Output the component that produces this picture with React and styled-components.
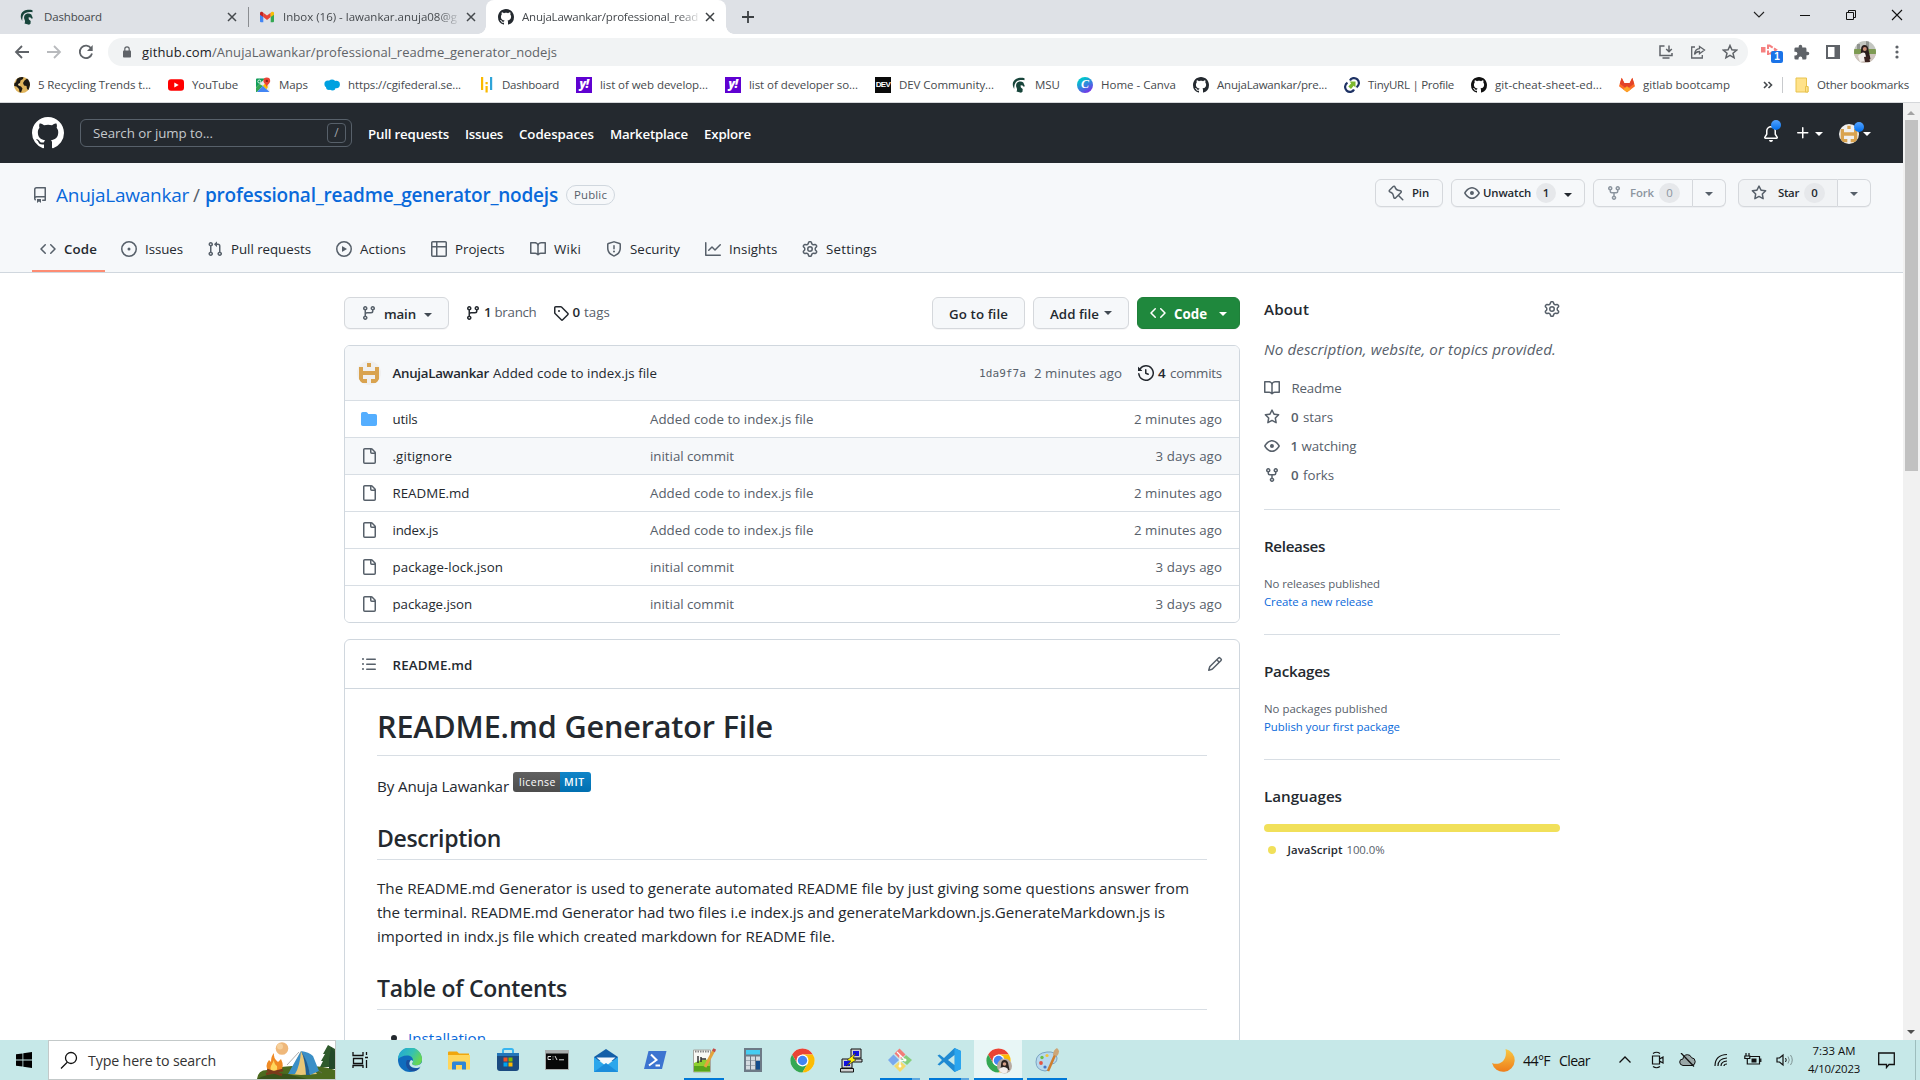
import React, { useLayoutEffect, useRef, useState } from "react";
import styled, { createGlobalStyle, css } from "styled-components";

const Global = createGlobalStyle`
  * { box-sizing: border-box; }
  html, body { margin: 0; padding: 0; overflow: hidden; background: #fff; }
  body { font-family: "Open Sans", "Noto Sans", sans-serif; color: #24292f; }
  svg { display: block; flex: none; }
`;

/* ---------- text ---------- */

const TextBox = styled.span`
  display: inline-block;
  flex: none;
  white-space: pre;
  font-family: ${(p) => (p.$mono ? '"DejaVu Sans Mono", "Liberation Mono", monospace' : '"Open Sans", "Noto Sans", sans-serif')};
  font-size: ${(p) => p.$size || 13.3}px;
  line-height: ${(p) => p.$lh || 20}px;
  font-weight: ${(p) => p.$weight || 400};
  font-style: ${(p) => (p.$italic ? "italic" : "normal")};
  color: ${(p) => p.$color || "#24292f"};
  margin-left: ${(p) => p.$ml || 0}px;
  padding-top: ${(p) => p.$pt || 0}px;
  padding-bottom: ${(p) => p.$pb || 0}px;
`;

// Tracks its letters so that the label takes exactly `w` pixels.
function Text({ w, children, ...rest }) {
  const ref = useRef(null);
  const [spacing, setSpacing] = useState(0);
  useLayoutEffect(() => {
    const natural = ref.current.getBoundingClientRect().width;
    setSpacing((w - natural) / String(children).length);
  }, []);
  return (
    <TextBox ref={ref} style={{ letterSpacing: spacing + "px" }} {...rest}>
      {children}
    </TextBox>
  );
}

/* ---------- octicons ---------- */

const paths = {
  repo: "M2 2.5A2.5 2.5 0 0 1 4.5 0h8.75a.75.75 0 0 1 .75.75v12.5a.75.75 0 0 1-.75.75h-2.5a.75.75 0 0 1 0-1.5h1.75v-2h-8a1 1 0 0 0-.714 1.7.75.75 0 1 1-1.072 1.05A2.495 2.495 0 0 1 2 11.5Zm10.5-1h-8a1 1 0 0 0-1 1v6.708A2.486 2.486 0 0 1 4.5 9h8ZM5 12.25a.25.25 0 0 1 .25-.25h3.5a.25.25 0 0 1 .25.25v3.25a.25.25 0 0 1-.4.2l-1.45-1.087a.249.249 0 0 0-.3 0L5.4 15.7a.25.25 0 0 1-.4-.2Z",
  code: "m11.28 3.22 4.25 4.25a.75.75 0 0 1 0 1.06l-4.25 4.25a.749.749 0 0 1-1.275-.326.749.749 0 0 1 .215-.734L13.94 8l-3.72-3.72a.749.749 0 0 1 .326-1.275.749.749 0 0 1 .734.215Zm-6.56 0a.751.751 0 0 1 1.042.018.751.751 0 0 1 .018 1.042L2.06 8l3.72 3.72a.749.749 0 0 1-.326 1.275.749.749 0 0 1-.734-.215L.47 8.53a.75.75 0 0 1 0-1.06Z",
  issue: "M8 9.5a1.5 1.5 0 1 0 0-3 1.5 1.5 0 0 0 0 3ZM8 0a8 8 0 1 1 0 16A8 8 0 0 1 8 0ZM1.5 8a6.5 6.5 0 1 0 13 0 6.5 6.5 0 0 0-13 0Z",
  pull: "M1.5 3.25a2.25 2.25 0 1 1 3 2.122v5.256a2.251 2.251 0 1 1-1.5 0V5.372A2.25 2.25 0 0 1 1.5 3.25Zm5.677-.177L9.573.677A.25.25 0 0 1 10 .854V2.5h1A2.5 2.5 0 0 1 13.5 5v5.628a2.251 2.251 0 1 1-1.5 0V5a1 1 0 0 0-1-1h-1v1.646a.25.25 0 0 1-.427.177L7.177 3.427a.25.25 0 0 1 0-.354ZM3.75 2.5a.75.75 0 1 0 0 1.5.75.75 0 0 0 0-1.5Zm0 9.5a.75.75 0 1 0 0 1.5.75.75 0 0 0 0-1.5Zm8.25.75a.75.75 0 1 0 1.5 0 .75.75 0 0 0-1.5 0Z",
  play: "M8 0a8 8 0 1 1 0 16A8 8 0 0 1 8 0ZM1.5 8a6.5 6.5 0 1 0 13 0 6.5 6.5 0 0 0-13 0Zm4.879-2.773 4.264 2.559a.25.25 0 0 1 0 .428l-4.264 2.559A.25.25 0 0 1 6 10.559V5.442a.25.25 0 0 1 .379-.215Z",
  table: "M0 1.75C0 .784.784 0 1.75 0h12.5C15.216 0 16 .784 16 1.75v12.5A1.75 1.75 0 0 1 14.25 16H1.75A1.75 1.75 0 0 1 0 14.25ZM6.5 6.5v8h7.75a.25.25 0 0 0 .25-.25V6.5Zm8-1.5V1.75a.25.25 0 0 0-.25-.25H6.5V5Zm-13 1.5v7.75c0 .138.112.25.25.25H5v-8ZM5 5V1.5H1.75a.25.25 0 0 0-.25.25V5Z",
  book: "M0 1.75A.75.75 0 0 1 .75 1h4.253c1.227 0 2.317.59 3 1.501A3.743 3.743 0 0 1 11.006 1h4.245a.75.75 0 0 1 .75.75v10.5a.75.75 0 0 1-.75.75h-4.507a2.25 2.25 0 0 0-1.591.659l-.622.621a.75.75 0 0 1-1.06 0l-.622-.621A2.25 2.25 0 0 0 5.258 13H.75a.75.75 0 0 1-.75-.75Zm7.251 10.324.004-5.073-.002-2.253A2.25 2.25 0 0 0 5.003 2.5H1.5v9h3.757a3.75 3.75 0 0 1 1.994.574ZM8.755 4.75l-.004 7.322a3.752 3.752 0 0 1 1.992-.572H14.5v-9h-3.495a2.25 2.25 0 0 0-2.25 2.25Z",
  shield: "M7.467.133a1.748 1.748 0 0 1 1.066 0l5.25 1.68A1.75 1.75 0 0 1 15 3.48V7c0 1.566-.32 3.182-1.303 4.682-.983 1.498-2.585 2.813-5.032 3.855a1.697 1.697 0 0 1-1.33 0c-2.447-1.042-4.049-2.357-5.032-3.855C1.32 10.182 1 8.566 1 7V3.48a1.75 1.75 0 0 1 1.217-1.667Zm.61 1.429a.25.25 0 0 0-.153 0l-5.25 1.68a.25.25 0 0 0-.174.238V7c0 1.358.275 2.666 1.057 3.86.784 1.194 2.121 2.34 4.366 3.297a.196.196 0 0 0 .154 0c2.245-.956 3.582-2.104 4.366-3.298C13.225 9.666 13.5 8.36 13.5 7V3.48a.251.251 0 0 0-.174-.237l-5.25-1.68ZM8.75 4.75v3a.75.75 0 0 1-1.5 0v-3a.75.75 0 0 1 1.5 0ZM9 10.5a1 1 0 1 1-2 0 1 1 0 0 1 2 0Z",
  graph: "M1.5 1.75V13.5h13.75a.75.75 0 0 1 0 1.5H.75a.75.75 0 0 1-.75-.75V1.75a.75.75 0 0 1 1.5 0Zm14.28 2.53-5.25 5.25a.75.75 0 0 1-1.06 0L7 7.06 4.28 9.78a.751.751 0 0 1-1.042-.018.751.751 0 0 1-.018-1.042l3.25-3.25a.75.75 0 0 1 1.06 0L10 7.94l4.72-4.72a.751.751 0 0 1 1.042.018.751.751 0 0 1 .018 1.042Z",
  gear: "M8 0a8.2 8.2 0 0 1 .701.031C9.444.095 9.99.645 10.16 1.29l.288 1.107c.018.066.079.158.212.224.231.114.454.243.668.386.123.082.233.09.299.071l1.103-.303c.644-.176 1.392.021 1.82.63.27.385.506.792.704 1.218.315.675.111 1.422-.364 1.891l-.814.806c-.049.048-.098.147-.088.294.016.257.016.515 0 .772-.01.147.038.246.088.294l.814.806c.475.469.679 1.216.364 1.891a7.977 7.977 0 0 1-.704 1.217c-.428.61-1.176.807-1.82.63l-1.102-.302c-.067-.019-.177-.011-.3.071a5.909 5.909 0 0 1-.668.386c-.133.066-.194.158-.211.224l-.29 1.106c-.168.646-.715 1.196-1.458 1.26a8.006 8.006 0 0 1-1.402 0c-.743-.064-1.289-.614-1.458-1.26l-.289-1.106c-.018-.066-.079-.158-.212-.224a5.738 5.738 0 0 1-.668-.386c-.123-.082-.233-.09-.299-.071l-1.103.303c-.644.176-1.392-.021-1.82-.63a8.12 8.12 0 0 1-.704-1.218c-.315-.675-.111-1.422.363-1.891l.815-.806c.05-.048.098-.147.088-.294a6.214 6.214 0 0 1 0-.772c.01-.147-.038-.246-.088-.294l-.815-.806C.635 6.045.431 5.298.746 4.623a7.92 7.92 0 0 1 .704-1.217c.428-.61 1.176-.807 1.82-.63l1.102.302c.067.019.177.011.3-.071.214-.143.437-.272.668-.386.133-.066.194-.158.211-.224l.29-1.106C6.009.645 6.556.095 7.299.03 7.53.01 7.764 0 8 0Zm-.571 1.525c-.036.003-.108.036-.137.146l-.289 1.105c-.147.561-.549.967-.998 1.189-.173.086-.34.183-.5.29-.417.278-.97.423-1.529.27l-1.103-.303c-.109-.03-.175.016-.195.045-.22.312-.412.644-.573.99-.014.031-.021.11.059.19l.815.806c.411.406.562.957.53 1.456a4.709 4.709 0 0 0 0 .582c.032.499-.119 1.05-.53 1.456l-.815.806c-.081.08-.073.159-.059.19.162.346.353.677.573.989.02.03.085.076.195.046l1.102-.303c.56-.153 1.113-.008 1.53.27.161.107.328.204.501.29.447.222.85.629.997 1.189l.289 1.105c.029.109.101.143.137.146a6.6 6.6 0 0 0 1.142 0c.036-.003.108-.036.137-.146l.289-1.105c.147-.561.549-.967.998-1.189.173-.086.34-.183.5-.29.417-.278.97-.423 1.529-.27l1.103.303c.109.029.175-.016.195-.045.22-.313.411-.644.573-.99.014-.031.021-.11-.059-.19l-.815-.806c-.411-.406-.562-.957-.53-1.456a4.709 4.709 0 0 0 0-.582c-.032-.499.119-1.05.53-1.456l.815-.806c.081-.08.073-.159.059-.19a6.464 6.464 0 0 0-.573-.989c-.02-.03-.085-.076-.195-.046l-1.102.303c-.56.153-1.113.008-1.53-.27a4.44 4.44 0 0 0-.501-.29c-.447-.222-.85-.629-.997-1.189l-.289-1.105c-.029-.11-.101-.143-.137-.146a6.6 6.6 0 0 0-1.142 0ZM11 8a3 3 0 1 1-6 0 3 3 0 0 1 6 0ZM9.5 8a1.5 1.5 0 1 0-3.001.001A1.5 1.5 0 0 0 9.5 8Z",
  eye: "M8 2c1.981 0 3.671.992 4.933 2.078 1.27 1.091 2.187 2.345 2.637 3.023a1.62 1.62 0 0 1 0 1.798c-.45.678-1.367 1.932-2.637 3.023C11.67 13.008 9.981 14 8 14c-1.981 0-3.671-.992-4.933-2.078C1.797 10.83.88 9.576.43 8.898a1.62 1.62 0 0 1 0-1.798c.45-.677 1.367-1.931 2.637-3.022C4.33 2.992 6.019 2 8 2ZM1.679 7.932a.12.12 0 0 0 0 .136c.411.622 1.241 1.75 2.366 2.717C5.176 11.758 6.527 12.5 8 12.5c1.473 0 2.825-.742 3.955-1.715 1.124-.967 1.954-2.096 2.366-2.717a.12.12 0 0 0 0-.136c-.412-.621-1.242-1.75-2.366-2.717C10.824 4.242 9.473 3.5 8 3.5c-1.473 0-2.825.742-3.955 1.715-1.124.967-1.954 2.096-2.366 2.717ZM8 10a2 2 0 1 1-.001-3.999A2 2 0 0 1 8 10Z",
  fork: "M5 5.372v.878c0 .414.336.75.75.75h4.5a.75.75 0 0 0 .75-.75v-.878a2.25 2.25 0 1 1 1.5 0v.878a2.25 2.25 0 0 1-2.25 2.25h-1.5v2.128a2.251 2.251 0 1 1-1.5 0V8.5h-1.5A2.25 2.25 0 0 1 3.5 6.25v-.878a2.25 2.25 0 1 1 1.5 0ZM5 3.25a.75.75 0 1 0-1.5 0 .75.75 0 0 0 1.5 0Zm6.75.75a.75.75 0 1 0 0-1.5.75.75 0 0 0 0 1.5Zm-3 8.75a.75.75 0 1 0-1.5 0 .75.75 0 0 0 1.5 0Z",
  star: "M8 .25a.75.75 0 0 1 .673.418l1.882 3.815 4.21.612a.75.75 0 0 1 .416 1.279l-3.046 2.97.719 4.192a.751.751 0 0 1-1.088.791L8 12.347l-3.766 1.98a.75.75 0 0 1-1.088-.79l.72-4.194L.818 6.374a.75.75 0 0 1 .416-1.28l4.21-.611L7.327.668A.75.75 0 0 1 8 .25Zm0 2.445L6.615 5.5a.75.75 0 0 1-.564.41l-3.097.45 2.24 2.184a.75.75 0 0 1 .216.664l-.528 3.084 2.769-1.456a.75.75 0 0 1 .698 0l2.77 1.456-.53-3.084a.75.75 0 0 1 .216-.664l2.24-2.183-3.096-.45a.75.75 0 0 1-.564-.41L8 2.694Z",
  branch: "M9.5 3.25a2.25 2.25 0 1 1 3 2.122V6A2.5 2.5 0 0 1 10 8.5H6a1 1 0 0 0-1 1v1.128a2.251 2.251 0 1 1-1.5 0V5.372a2.25 2.25 0 1 1 1.5 0v1.836A2.493 2.493 0 0 1 6 7h4a1 1 0 0 0 1-1v-.628A2.25 2.25 0 0 1 9.5 3.25Zm-6 0a.75.75 0 1 0 1.5 0 .75.75 0 0 0-1.5 0Zm8.25-.75a.75.75 0 1 0 0 1.5.75.75 0 0 0 0-1.5ZM4.25 12a.75.75 0 1 0 0 1.5.75.75 0 0 0 0-1.5Z",
  tag: "M1 7.775V2.75C1 1.784 1.784 1 2.75 1h5.025c.464 0 .91.184 1.238.513l6.25 6.25a1.75 1.75 0 0 1 0 2.474l-5.026 5.026a1.75 1.75 0 0 1-2.474 0l-6.25-6.25A1.752 1.752 0 0 1 1 7.775Zm1.5 0c0 .066.026.13.073.177l6.25 6.25a.25.25 0 0 0 .354 0l5.025-5.025a.25.25 0 0 0 0-.354l-6.25-6.25a.25.25 0 0 0-.177-.073H2.75a.25.25 0 0 0-.25.25ZM6 5a1 1 0 1 1 0 2 1 1 0 0 1 0-2Z",
  history: "m.427 1.927 1.215 1.215a8.002 8.002 0 1 1-1.6 5.685.75.75 0 1 1 1.493-.154 6.5 6.5 0 1 0 1.18-4.458l1.358 1.358A.25.25 0 0 1 3.896 6H.25A.25.25 0 0 1 0 5.75V2.104a.25.25 0 0 1 .427-.177ZM7.75 4a.75.75 0 0 1 .75.75v2.992l2.028.812a.75.75 0 0 1-.557 1.392l-2.5-1A.751.751 0 0 1 7 8.25v-3.5A.75.75 0 0 1 7.75 4Z",
  file: "M2 1.75C2 .784 2.784 0 3.75 0h6.586c.464 0 .909.184 1.237.513l2.914 2.914c.329.328.513.773.513 1.237v9.586A1.75 1.75 0 0 1 13.25 16h-9.5A1.75 1.75 0 0 1 2 14.25Zm1.75-.25a.25.25 0 0 0-.25.25v12.5c0 .138.112.25.25.25h9.5a.25.25 0 0 0 .25-.25V6h-2.75A1.75 1.75 0 0 1 9 4.25V1.5Zm6.75.062V4.25c0 .138.112.25.25.25h2.688l-.011-.013-2.914-2.914-.013-.011Z",
  folder: "M1.75 1A1.75 1.75 0 0 0 0 2.75v10.5C0 14.216.784 15 1.75 15h12.5A1.75 1.75 0 0 0 16 13.25v-8.5A1.75 1.75 0 0 0 14.25 3H7.5a.25.25 0 0 1-.2-.1l-.9-1.2C6.07 1.26 5.55 1 5 1H1.75Z",
  list: "M5.75 2.5h8.5a.75.75 0 0 1 0 1.5h-8.5a.75.75 0 0 1 0-1.5Zm0 5h8.5a.75.75 0 0 1 0 1.5h-8.5a.75.75 0 0 1 0-1.5Zm0 5h8.5a.75.75 0 0 1 0 1.5h-8.5a.75.75 0 0 1 0-1.5ZM2 14a1 1 0 1 1 0-2 1 1 0 0 1 0 2Zm1-6a1 1 0 1 1-2 0 1 1 0 0 1 2 0ZM2 4a1 1 0 1 1 0-2 1 1 0 0 1 0 2Z",
  pencil: "M11.013 1.427a1.75 1.75 0 0 1 2.474 0l1.086 1.086a1.75 1.75 0 0 1 0 2.474l-8.61 8.61c-.21.21-.47.364-.756.445l-3.251.93a.75.75 0 0 1-.927-.928l.929-3.25c.081-.286.235-.547.445-.758l8.61-8.61Zm.176 4.823L9.75 4.81l-6.286 6.287a.253.253 0 0 0-.064.108l-.558 1.953 1.953-.558a.253.253 0 0 0 .108-.064Zm1.238-3.763a.25.25 0 0 0-.354 0L10.811 3.75l1.439 1.44 1.263-1.263a.25.25 0 0 0 0-.354Z",
  bell: "M8 16a2 2 0 0 0 1.985-1.75c.017-.137-.097-.25-.235-.25h-3.5c-.138 0-.252.113-.235.25A2 2 0 0 0 8 16ZM3 5a5 5 0 0 1 10 0v2.947c0 .05.015.098.042.139l1.703 2.555A1.519 1.519 0 0 1 13.482 13H2.518a1.516 1.516 0 0 1-1.263-2.36l1.703-2.554A.255.255 0 0 0 3 7.947Zm5-3.5A3.5 3.5 0 0 0 4.5 5v2.947c0 .346-.102.683-.294.97l-1.703 2.556a.017.017 0 0 0-.003.01l.001.006c0 .002.002.004.004.006l.006.004.007.001h10.964l.007-.001.006-.004.004-.006.001-.007a.017.017 0 0 0-.003-.01l-1.703-2.554a1.745 1.745 0 0 1-.294-.97V5A3.5 3.5 0 0 0 8 1.5Z",
  plus: "M7.75 2a.75.75 0 0 1 .75.75V7h4.25a.75.75 0 0 1 0 1.5H8.5v4.25a.75.75 0 0 1-1.5 0V8.5H2.75a.75.75 0 0 1 0-1.5H7V2.75A.75.75 0 0 1 7.75 2Z",
  pin: "m11.294.984 3.722 3.722a1.75 1.75 0 0 1-.504 2.826l-1.327.613a3.089 3.089 0 0 0-1.707 2.084l-.584 2.454c-.317 1.332-1.972 1.8-2.94.832L5.75 11.311 1.78 15.28a.749.749 0 1 1-1.06-1.06l3.969-3.97-2.204-2.204c-.968-.968-.5-2.623.832-2.94l2.454-.584a3.08 3.08 0 0 0 2.084-1.707l.613-1.327a1.75 1.75 0 0 1 2.826-.504ZM6.283 9.723l2.732 2.731a.25.25 0 0 0 .42-.119l.584-2.454a4.586 4.586 0 0 1 2.537-3.098l1.328-.613a.25.25 0 0 0 .072-.404l-3.722-3.722a.25.25 0 0 0-.404.072l-.613 1.328a4.584 4.584 0 0 1-3.098 2.537l-2.454.584a.25.25 0 0 0-.119.42l2.731 2.732Z",
  github: "M8 0c4.42 0 8 3.58 8 8a8.013 8.013 0 0 1-5.45 7.59c-.4.08-.55-.17-.55-.38 0-.27.01-1.13.01-2.2 0-.75-.25-1.23-.54-1.48 1.78-.2 3.65-.88 3.65-3.95 0-.88-.31-1.59-.82-2.15.08-.2.36-1.02-.08-2.12 0 0-.67-.22-2.2.82-.64-.18-1.32-.27-2-.27-.68 0-1.36.09-2 .27-1.53-1.03-2.2-.82-2.2-.82-.44 1.1-.16 1.92-.08 2.12-.51.56-.82 1.28-.82 2.15 0 3.06 1.86 3.75 3.64 3.95-.23.2-.44.55-.51 1.07-.46.21-1.61.55-2.33-.66-.15-.24-.6-.83-1.23-.82-.67.01-.27.38.01.53.34.19.73.9.82 1.13.16.45.68 1.31 2.69.94 0 .67.01 1.3.01 1.49 0 .21-.15.45-.55.38A7.995 7.995 0 0 1 0 8c0-4.42 3.58-8 8-8Z",
};

const Svg = styled.svg`
  margin-left: ${(p) => p.$ml || 0}px;
  fill: ${(p) => p.$color || "#57606a"};
  transform: ${(p) => (p.$flip ? "scaleX(-1)" : "none")};
`;

const Oct = ({ name, size = 16, color, ml, flip }) => (
  <Svg width={size} height={size} viewBox="0 0 16 16" $color={color} $ml={ml} $flip={flip}>
    <path d={paths[name]} />
  </Svg>
);

const Caret = styled.i`
  flex: none;
  width: 0;
  height: 0;
  border: 4px solid transparent;
  border-bottom: 0;
  border-top-color: ${(p) => p.$color || "#24292f"};
  margin-left: ${(p) => p.$ml || 0}px;
  margin-top: ${(p) => p.$mt || 0}px;
`;

const PlainSvg = styled.svg`
  margin-left: ${(p) => p.$ml || 0}px;
`;
const Line = ({ d, w = 16, h = 16, vb, color = "#5f6368", sw = 1.5, ml, fill = "none" }) => (
  <PlainSvg width={w} height={h} viewBox={vb || `0 0 ${w} ${h}`} $ml={ml}>
    <path d={d} stroke={color} strokeWidth={sw} fill={fill} />
  </PlainSvg>
);

/* ---------- site icons ---------- */

const Spartan = ({ ml }) => (
  <PlainSvg width="16" height="16" viewBox="0 0 16 16" $ml={ml}>
    <path fill="#18453b" d="M13.5 1.2C9 .2 3.500 1 2 5.600 1.400 7.800 2 10 3.200 12c.2-2.500 0-4.500 1.300-6.300C6 3.400 9.500 2.700 13.500 3.300z" />
    <path fill="#18453b" d="M5.500 6.500C7 4.300 10.300 4 12.300 5.500l1.400 3.200-.6 1.200-2-1.700-1.600.2.400 2.200 1.800 1.500-.2 2.700-1.500.9-4.500-1.200c.9-1.500.6-2.800-.1-4.200-.5-1.200-.4-2.700.1-3.800z" />
  </PlainSvg>
);
const Gmail = () => (
  <svg width="16" height="16" viewBox="0 0 16 16">
    <path fill="#4285f4" d="M1 3.500 4.300 6v7.200H2A1 1 0 0 1 1 12.200z" />
    <path fill="#34a853" d="M15 3.500 11.700 6v7.200H14a1 1 0 0 0 1-1z" />
    <path fill="#ea4335" d="M4.300 3.800 8 6.600l3.700-2.800v4.300L8 10.900 4.300 8.100z" />
    <path fill="#c5221f" d="M1 4.200c0-1.500 1.600-1.900 2.500-1.200l.8.700v4.400L1 5.700z" />
    <path fill="#fbbc04" d="M15 4.200c0-1.500-1.600-1.900-2.500-1.200l-.8.700v4.400L15 5.700z" />
  </svg>
);
const Globe = () => (
  <svg width="16" height="16" viewBox="0 0 16 16">
    <circle cx="8" cy="8" r="8" fill="#e0b45c" />
    <path fill="#f3dfae" d="M1 6q2-3 4-3l1 4-2 5z" />
    <path fill="#1d1a14" d="M3 1.800Q6-.5 9.500.2L9 2 6.500 3.500 6 6l-2 1 .5 1.500L7 9.500l1.500 2L7 15.500 5.500 15 5 12 2.500 9.500.2 9 .3 6.500 2 5zM10.500 3.500l2.500-2q3 2.500 3 6.500l-1.500 5-1.500-1-.5-3-2.500-.5-1-2.500z" />
  </svg>
);
const YouTube = () => (
  <svg width="16" height="16" viewBox="0 0 16 16">
    <rect x="0" y="2.300" width="16" height="11.400" rx="3" fill="#f00" />
    <path d="M6.300 5.500v5L10.700 8z" fill="#fff" />
  </svg>
);
const Maps = () => (
  <svg width="16" height="16" viewBox="0 0 16 16">
    <rect x="1" y="1.500" width="13.500" height="13.500" rx="1" fill="#e8eaed" />
    <path d="M1 2.500a1 1 0 0 1 1-1h8L1 10.500z" fill="#0f9d58" />
    <path d="M1 10.500 4.500 7 8 9l-6 6H1z" fill="#34a853" />
    <path d="M2 15 8 8.800 14.500 15z" fill="#4285f4" />
    <path d="M8 8.800 10.500 6l2.500 4-1.500 2.200z" fill="#fbbc04" />
    <path d="M11.800.5a3.400 3.400 0 0 0-3.400 3.400c0 2.400 3 3.300 3.400 6.300.4-3 3.400-3.900 3.400-6.300A3.400 3.400 0 0 0 11.800.5z" fill="#ea4335" />
    <circle cx="11.800" cy="3.900" r="1.200" fill="#8c1d18" />
    <circle cx="4.300" cy="4.500" r="1.500" stroke="#fff" fill="none" strokeWidth=".8" />
  </svg>
);
const Cloud = () => (
  <svg width="16" height="16" viewBox="0 0 16 16" fill="#00a1e0">
    <circle cx="4" cy="7" r="3.600" /><circle cx="8" cy="6" r="3.600" /><circle cx="12.200" cy="7.500" r="3.700" /><circle cx="5" cy="10" r="3" /><circle cx="8.500" cy="10.500" r="3" />
  </svg>
);
const Bars = () => (
  <svg width="16" height="16" viewBox="0 0 16 16">
    <path d="M3 0h2.200v13H3zM7.500 9h2.200v6.500H7.500zM7.500 5h2.200v2.300H7.500z" fill="#fbb900" />
    <path d="M12 0h2.200v13H12z" fill="#2fa4d8" />
  </svg>
);
const YahooBox = styled.span`
  width: 16px; height: 16px; background: #5f01d1; color: #fff; flex: none;
  font: italic 800 12px/14px "Open Sans", sans-serif; text-align: center; letter-spacing: -0.5px;
`;
const DevBox = styled.span`
  width: 16px; height: 16px; background: #0a0a0a; color: #fff; flex: none; overflow: hidden;
  font: 700 8px/16px "Liberation Sans", sans-serif; text-align: center; letter-spacing: -0.6px;
`;
const CanvaBall = styled.span`
  width: 16px; height: 16px; border-radius: 50%; flex: none; color: #fff;
  background: linear-gradient(150deg, #00c4cc 20%, #3a7be0 55%, #7d2ae8 90%);
  font: italic 600 12px/15px "Liberation Serif", serif; text-align: center;
`;
const Tiny = () => (
  <svg width="16" height="16" viewBox="0 0 16 16">
    <path d="M6 3.500C7 1 11 .2 13.300 2.400c2.600 2.600 1.800 6.300-.8 7.800" fill="none" stroke="#1e3264" strokeWidth="2.200" />
    <path d="M10 12.500c-1 2.500-5 3.300-7.300 1.100C.1 11 .9 7.300 3.500 5.800" fill="none" stroke="#1e3264" strokeWidth="2.200" />
    <path d="M5.500 4.500h6v6L9.700 8.800 7 12 4.300 9.500 7.200 6.300z" fill="#7cb82f" />
  </svg>
);
const Gitlab = () => (
  <svg width="16" height="16" viewBox="0 0 16 16">
    <path fill="#fc6d26" d="M8 15.200 0 9.300 2.700.8 5.300 6h5.400L13.300.8 16 9.300z" />
    <path fill="#e24329" d="M2.700.8 5.300 6h5.400L13.300.8l1.900 6L8 12 .8 6.800z" />
    <path fill="#fca326" d="m4 12.300 4-3 4 3-4 2.900z" />
  </svg>
);
const Folder = () => (
  <svg width="14" height="18" viewBox="0 0 14 18">
    <path d="M1 2h10.500v8.500H13V16H1z" fill="#ffe28a" stroke="#e8c34f" />
    <path d="M10.500 16v-5.500H13V16z" fill="#ffe28a" stroke="#e8c34f" />
  </svg>
);

/* ---------- browser chrome ---------- */

const Screen = styled.div`
  width: 1920px; height: 1080px; overflow: hidden; display: flex; flex-direction: column; background: #fff;
`;
const TabStrip = styled.div`
  height: 34px; flex: none; background: #dee1e6; display: flex; align-items: stretch;
`;
const Tab = styled.div`
  width: ${(p) => p.$w}px; flex: none; display: flex; align-items: center; position: relative;
  padding-left: ${(p) => p.$pl}px;
  ${(p) =>
    p.$active &&
    css`
      background: #fff; border-radius: 8px 8px 0 0;
      &::before, &::after {
        content: ""; position: absolute; bottom: 0; width: 8px; height: 8px;
      }
      &::before { left: -8px; background: radial-gradient(circle at 0 0, transparent 7.5px, #fff 8px); }
      &::after { right: -8px; background: radial-gradient(circle at 100% 0, transparent 7.5px, #fff 8px); }
    `}
`;
const TabText = styled.div`
  width: ${(p) => p.$w}px; margin-left: ${(p) => p.$ml}px; flex: none; display: flex;
  ${(p) => p.$fade && css`mask-image: linear-gradient(90deg, #000 calc(100% - 20px), rgba(0, 0, 0, 0.15));`}
`;
const TabRule = styled.div`
  width: 1px; height: 20px; background: #8a8d91; align-self: center; margin-left: 8px;
`;
const Spacer = styled.div`flex: 1;`;
const WinControls = styled.div`
  display: flex; align-items: center; height: 28px; padding-top: 1px; gap: 30px; margin-right: 15px;
`;
const closeX = "M2 2l8 8M10 2l-8 8";

const Toolbar = styled.div`
  height: 34px; flex: none; display: flex; align-items: center; padding: 2px 0 0 14px; background: #fff;
`;
const Omnibox = styled.div`
  width: 1640px; height: 28px; border-radius: 14px; background: #f1f3f4; margin-left: 14px; padding: 0 10px 0 14px;
  display: flex; align-items: center; flex: none;
`;
const Badge1 = styled.span`
  position: absolute; left: 10px; top: 9px; width: 12px; height: 12px; border-radius: 2px; background: #1a73e8;
  color: #fff; font: 700 10px/12px "Liberation Sans", sans-serif; text-align: center;
`;
const Over = styled.div`
  position: relative; flex: none; width: ${(p) => p.$w}px; height: ${(p) => p.$h}px; margin-left: ${(p) => p.$ml || 0}px;
  margin-top: ${(p) => p.$mt || 0}px;
`;
const BookmarkBar = styled.div`
  height: 35px; flex: none; border-bottom: 1px solid #d5d7da; display: flex; align-items: center; padding-left: 14px; background: #fff;
`;
const Bookmark = styled.div`
  width: ${(p) => p.$w}px; flex: none; display: flex; align-items: center; gap: 8px;
`;
const BarRule = styled.div`
  width: 1px; height: 16px; background: #c8cacd; margin: 0 12px 0 9px;
`;

const bookmarks = [
  [154, Globe, "5 Recycling Trends t...", 113],
  [87, YouTube, "YouTube", 46],
  [69, Maps, "Maps", 29],
  [154, Cloud, "https://cgifederal.se...", 113],
  [98, Bars, "Dashboard", 57],
  [149, () => <YahooBox>y!</YahooBox>, "list of web develop...", 108],
  [150, () => <YahooBox>y!</YahooBox>, "list of developer so...", 109],
  [136, () => <DevBox>DEV</DevBox>, "DEV Community...", 95],
  [66, Spartan, "MSU", 25],
  [116, () => <CanvaBall>C</CanvaBall>, "Home - Canva", 75],
  [151, () => <Oct name="github" color="#24292f" />, "AnujaLawankar/pre...", 110],
  [127, Tiny, "TinyURL | Profile", 86],
  [148, () => <Oct name="github" color="#111" />, "git-cheat-sheet-ed...", 107],
  [144, Gitlab, "gitlab bootcamp", 87],
];

const Portrait = ({ size = 22, ml }) => (
  <PlainSvg width={size} height={size} viewBox="0 0 22 22" $ml={ml}>
    <clipPath id={"face" + size}><circle cx="11" cy="11" r="11" /></clipPath>
    <g clipPath={`url(#face${size})`}>
      <path fill="#c3c6c0" d="M0 0h22v22H0z" />
      <path fill="#7d9a52" d="M0 8h22v5H0z" />
      <path fill="#8f938e" d="M12 0h3v8h-3zM3 3h3v5H3z" />
      <path fill="#cfc4bd" d="M0 13h22v9H0z" />
      <path fill="#2a1d1b" d="M7 9q0-5 3.500-5t4 5l2 9-4 1-6-4z" />
      <circle cx="10.800" cy="8" r="2" fill="#c98f78" />
      <path fill="#f4efec" d="M4 15q4-5 7-3l2 7-7 2z" />
      <path fill="#3a2320" d="M10 16l5-1 1 6h-5z" />
    </g>
  </PlainSvg>
);

function Browser() {
  return (
    <>
      <TabStrip>
        <Tab $w={240} $pl={19}>
          <Spartan />
          <TabText $w={170} $ml={9}><Text w={58} $size={11.5} $color="#45494d">Dashboard</Text></TabText>
          <Line w={12} h={12} d={closeX} color="#45494d" ml={12} />
        </Tab>
        <TabRule />
        <Tab $w={237} $pl={10}>
          <Gmail />
          <TabText $w={175} $ml={8} $fade><Text w={174} $size={11.5} $color="#45494d">Inbox (16) - lawankar.anuja08@g</Text></TabText>
          <Line w={12} h={12} d={closeX} color="#45494d" ml={7} />
        </Tab>
        <Tab $w={240} $pl={12} $active>
          <Oct name="github" color="#24292f" />
          <TabText $w={176} $ml={8} $fade><Text w={176} $size={11.5} $color="#45494d">AnujaLawankar/professional_read</Text></TabText>
          <Line w={12} h={12} d={closeX} color="#3c4043" ml={6} />
        </Tab>
        <Line w={14} h={34} d="M7 11v12M1 17h12" color="#3c4043" sw={1.8} ml={15} />
        <Spacer />
        <WinControls>
          <Line w={16} h={16} d="M3 5l5 5 5-5" color="#222" sw={1.1} />
          <Line w={16} h={16} d="M3 8.500h10" color="#111" sw={1} />
          <Line w={16} h={16} d="M3.500 5.500h7v7h-7zM5.500 5.500v-2h7v7h-2" color="#111" sw={1} />
          <Line w={16} h={16} d="M3 3l10 10M13 3L3 13" color="#111" sw={1.1} />
        </WinControls>
      </TabStrip>
      <Toolbar>
        <Line w={16} h={16} d="M15 8H2M8 2L2 8l6 6" sw={1.8} />
        <Line w={16} h={16} d="M1 8h13M8 2l6 6-6 6" sw={1.8} color="#b8babd" ml={16} />
        <PlainSvg width="16" height="16" viewBox="0 0 16 16" $ml={16}>
          <path d="M13.200 4.500A6.200 6.200 0 1 0 14 9.500" fill="none" stroke="#5f6368" strokeWidth="1.800" />
          <path d="M14.700 1v6H9z" fill="#5f6368" />
        </PlainSvg>
        <Omnibox>
          <svg width="10" height="12" viewBox="0 0 10 12">
            <rect x="1" y="4.500" width="8" height="7" rx=".8" fill="#5f6368" />
            <path d="M2.800 5V3a2.200 2.200 0 0 1 4.400 0v2" fill="none" stroke="#5f6368" strokeWidth="1.200" />
          </svg>
          <Text w={70} $size={13} $color="#202124" $ml={10}>github.com</Text>
          <Text w={345} $size={13} $color="#5f6368">/AnujaLawankar/professional_readme_generator_nodejs</Text>
          <Spacer />
          <Line w={16} h={16} d="M6.500 2H2v9.500h12V9M4.500 14h7M11 1.500v6M8.200 5L11 7.800 13.800 5" />
          <Line w={16} h={16} d="M5 3H1.700v11h10.600v-3M9.500 2.500L14.500 6l-5 3.700V7.500C7 7.500 5.500 8.500 4.500 10.500 4.700 7.500 6.500 5 9.500 4.700z" ml={16} sw={1.3} />
          <Line w={16} h={16} d="M8 1.500l1.900 4.300 4.600.4-3.500 3 1.100 4.600L8 11.400l-4.100 2.400L5 9.200l-3.500-3 4.600-.4z" ml={16} />
        </Omnibox>
        <Over $w={24} $h={20} $ml={13}>
          <svg width="17" height="16" viewBox="0 0 17 16">
            <path d="M0 5h4.500v5.500H0z" fill="#f58080" />
            <path d="M7 2.500V13l8-5.200z" fill="none" stroke="#f58080" strokeWidth="2" strokeDasharray="4.500 1.500" />
          </svg>
          <Badge1>1</Badge1>
        </Over>
        <PlainSvg width="17" height="17" viewBox="0 0 24 24" $ml={8}>
          <path fill="#5f6368" d="M20.500 11H19V7a2 2 0 0 0-2-2h-4V3.500a2.500 2.500 0 0 0-5 0V5H4a2 2 0 0 0-2 2v3.800h1.500a2.700 2.700 0 0 1 0 5.400H2V20a2 2 0 0 0 2 2h3.800v-1.500a2.700 2.700 0 0 1 5.400 0V22H17a2 2 0 0 0 2-2v-4h1.500a2.500 2.500 0 0 0 0-5z" />
        </PlainSvg>
        <PlainSvg width="14" height="14" viewBox="0 0 14 14" $ml={16}>
          <path fillRule="evenodd" fill="#5f6368" d="M0 0h14v14H0zM2 2v10h6.500V2z" />
        </PlainSvg>
        <Portrait ml={14} />
        <PlainSvg width="4" height="14" viewBox="0 0 4 14" $ml={19}>
          <g fill="#5f6368"><circle cx="2" cy="2" r="1.600" /><circle cx="2" cy="7" r="1.600" /><circle cx="2" cy="12" r="1.600" /></g>
        </PlainSvg>
      </Toolbar>
      <BookmarkBar>
        {bookmarks.map(([w, Icon, label, tw], i) => (
          <Bookmark key={i} $w={w}>
            <Icon />
            <Text w={tw} $size={11.5} $pb={1} $color="#45494d">{label}</Text>
          </Bookmark>
        ))}
        <Line w={10} h={10} d="M1 2l3 3-3 3M5.500 2l3 3-3 3" color="#45494d" sw={1.600} />
        <BarRule />
        <Folder />
        <Text w={92} $size={11.5} $pb={1} $color="#45494d" $ml={8}>Other bookmarks</Text>
      </BookmarkBar>
    </>
  );
}

/* ---------- page ---------- */

const View = styled.div`
  flex: none; height: 937px; display: flex; overflow: hidden;
`;
const Page = styled.div`
  width: 1903px; height: 937px; overflow: hidden; flex: none;
`;
const Scrollbar = styled.div`
  width: 17px; background: #f1f1f1; display: flex; flex-direction: column; align-items: center; padding: 7px 0 5px;
`;
const Thumb = styled.div`
  width: 13px; height: 351px; background: #c1c1c1; margin-top: 5px;
`;
const Head = styled.header`
  height: 60px; background: #24292f; display: flex; align-items: center; padding-left: 32px;
`;
const SearchBox = styled.div`
  width: 272px; height: 28px; margin-left: 16px; border: 1px solid #57606a; border-radius: 6px; display: flex; align-items: center;
  padding: 0 5px 0 12px;
`;
const Slash = styled.div`
  width: 19px; height: 20px; border: 1px solid #57606a; border-radius: 4px; color: #a0a5ab; margin-left: auto;
  font: 12px/18px "Open Sans", sans-serif; text-align: center;
`;
const HeadNav = styled.nav`
  display: flex; gap: 16px; margin: 1px 0 0 16px;
`;
const BlueDot = styled.i`
  position: absolute; right: ${(p) => p.$r}px; top: ${(p) => p.$t}px; width: 10px; height: 10px; border-radius: 50%;
  background: linear-gradient(#54a3ff, #006eed);
`;

const Identicon = ({ size }) => (
  <svg width={size} height={size} viewBox="0 0 24 24">
    <clipPath id={"id" + size}><circle cx="12" cy="12" r="12" /></clipPath>
    <g clipPath={`url(#id${size})`}>
      <path fill="#f0f0f0" d="M0 0h24v24H0z" />
      <path fill="#d9a34f" d="M10 2h4v4h-4zM2 6h4v4h12V6h4v12l-2 4h-6v-4h4v-4H6v4h4v4H4l-2-4z" />
    </g>
  </svg>
);

const RepoHead = styled.div`
  height: 110px; background: #f6f8fa; border-bottom: 1px solid #d0d7de; display: flex; flex-direction: column;
`;
const RepoTop = styled.div`
  height: 64px; display: flex; align-items: center; padding: 0 32px;
`;
const Actions = styled.div`
  display: flex; padding-bottom: 4px;
`;
const Public = styled.span`
  width: 49px; height: 20px; border: 1px solid #d0d7de; border-radius: 10px; margin: 0 0 1px 8px; display: flex; align-items: center; justify-content: center;
`;
const Btn = styled.div`
  height: ${(p) => p.$h || 28}px; width: ${(p) => p.$w}px; flex: none; display: flex; align-items: center; padding-left: ${(p) => p.$pl || 0}px;
  border: 1px solid ${(p) => (p.$green ? "#1f7f3a" : "#d5d8dc")}; border-radius: 6px;
  background: ${(p) => (p.$green ? "#1f883d" : p.$bg || "#f6f8fa")}; margin-left: ${(p) => p.$ml || 0}px;
  box-shadow: 0 1px 0 rgba(31, 35, 40, 0.04);
  ${(p) => p.$side === "l" && css`border-radius: 6px 0 0 6px;`}
  ${(p) => p.$side === "r" && css`border-radius: 0 6px 6px 0; border-left: 0;`}
`;
const Count = styled.span`
  width: ${(p) => p.$w}px; height: 20px; border-radius: 10px; background: #e6e8eb; margin-left: ${(p) => p.$ml}px; display: flex; justify-content: center;
`;
const Nav = styled.nav`
  height: 45px; display: flex; padding-left: 32px;
`;
const NavItem = styled.div`
  width: ${(p) => p.$w}px; margin-right: 8px; height: 45px; flex: none; display: flex; align-items: center; gap: 8px; padding: 0 0 0 8px;
  border-bottom: 2px solid ${(p) => (p.$on ? "#fd8c73" : "transparent")};
`;
const navItems = [
  ["code", "Code", 73, 33], ["issue", "Issues", 78, 38], ["pull", "Pull requests", 121, 80], ["play", "Actions", 87, 46],
  ["table", "Projects", 91, 49.5], ["book", "Wiki", 68, 27], ["shield", "Security", 91, 50], ["graph", "Insights", 89, 48.5], ["gear", "Settings", 90, 51],
];

const Columns = styled.div`
  display: flex; gap: 24px; padding: 24px 0 0 344px;
`;
const Main = styled.main`width: 896px; flex: none;`;
const Side = styled.aside`width: 296px; flex: none;`;
const Bar = styled.div`height: 32px; display: flex; align-items: center;`;
const Box = styled.section`
  border: 1px solid #d0d7de; border-radius: 6px; margin-top: 16px; overflow: hidden;
`;
const LastCommit = styled.div`
  height: 54px; background: #f6f8fa; display: flex; align-items: center; padding: 0 17px 0 12px;
`;
const Row = styled.div`
  height: 37px; border-top: 1px solid #d8dee4; display: flex; align-items: center; padding: 0 17px 0 16px;
  background: ${(p) => (p.$hover ? "#f6f8fa" : "#fff")};
`;
const NameCell = styled.div`width: 257.5px; margin-left: 15.5px; display: flex;`;
const files = [
  ["folder", "utils", 25, true, true], ["file", ".gitignore", 59.5, false, false], ["file", "README.md", 77, true, true],
  ["file", "index.js", 45.5, true, true], ["file", "package-lock.json", 110.5, false, false], ["file", "package.json", 79.5, false, false],
];

const ReadmeHead = styled.div`
  height: 49px; display: flex; align-items: center; padding: 0 16px; border-bottom: 1px solid #d0d7de;
`;
const Article = styled.article`padding: 16px 32px;`;
const H1 = styled.h1`
  margin: 0 0 16px; height: 51px; border-bottom: 1px solid #d8dee4; display: flex; font-weight: 600;
`;
const H2 = styled.h2`
  margin: 24px 0 16px; height: 38px; padding-top: 1px; border-bottom: 1px solid #d8dee4; display: flex; font-weight: 600;
`;
const Para = styled.div`
  display: flex; flex-direction: column; align-items: flex-start; margin-bottom: 16px;
`;
const ByLine = styled.div`height: 26px; display: flex; align-items: flex-start; padding-top: 2px;`;
const License = styled.span`
  display: flex; height: 20px; width: 78px; margin: -2px 0 0 4px; border-radius: 3px; overflow: hidden;
  > span { background: linear-gradient(#606060, #4d4d4d); width: 47px; display: flex; padding-left: 6px; }
  > span + span { background: linear-gradient(#1085c8, #006fb0); width: 31px; padding-left: 4px; }
`;
const Item = styled.div`
  display: flex; align-items: center; height: 24px; padding-left: 14px;
  &::before { content: ""; width: 6px; height: 6px; border-radius: 50%; background: #24292f; margin-right: 11px; }
`;

const SideHead = styled.div`display: flex; align-items: center; justify-content: space-between; height: 24px;`;
const Meta = styled.div`height: 29px; display: flex; align-items: center;`;
const MetaList = styled.div`margin-top: 12px; padding-bottom: 20px; border-bottom: 1px solid #d8dee4;`;
const SideBlock = styled.div`
  padding-top: 24px; height: 125px; border-bottom: ${(p) => (p.$last ? 0 : 1)}px solid #d8dee4; display: flex; flex-direction: column; align-items: flex-start;
`;
const Gap = styled.div`height: ${(p) => p.$h}px; width: ${(p) => p.$w || 0}px; flex: none;`;
const LangBar = styled.div`width: 296px; height: 8px; border-radius: 6px; background: #f1e05a; margin: 16px 0 8px; flex: none;`;
const LangRow = styled.div`display: flex; align-items: center; padding-left: 4px; height: 20px;`;
const LangDot = styled.i`width: 8px; height: 8px; border-radius: 50%; background: #f1e05a; margin-right: 11.5px;`;

const muted = "#57606a";
const blue = "#0969da";

function GitHub() {
  return (
    <View>
      <Page>
        <Head>
          <Oct name="github" size={32} color="#fff" />
          <SearchBox>
            <Text w={120} $color="#c4c8cc">Search or jump to...</Text>
            <Slash>/</Slash>
          </SearchBox>
          <HeadNav>
            <Text w={81} $weight={600} $color="#fff" $pt={1}>Pull requests</Text>
            <Text w={38} $weight={600} $color="#fff" $pt={1}>Issues</Text>
            <Text w={75} $weight={600} $color="#fff" $pt={1}>Codespaces</Text>
            <Text w={78} $weight={600} $color="#fff" $pt={1}>Marketplace</Text>
            <Text w={47} $weight={600} $color="#fff" $pt={1}>Explore</Text>
          </HeadNav>
          <Spacer />
          <Over $w={18} $h={24} $mt={6}>
            <Gap $h={2} />
            <Oct name="bell" color="#fff" />
            <BlueDot $r={0} $t={-4} />
          </Over>
          <Oct name="plus" color="#fff" ml={14} />
          <Caret $color="#fff" $ml={4} $mt={2} />
          <Over $w={25} $h={20} $ml={16} $mt={2}>
            <Identicon size={20} />
            <BlueDot $r={0} $t={-2} />
          </Over>
          <Caret $color="#fff" $ml={-1} $mt={1} />
          <Gap $h={1} $w={32} />
        </Head>
        <RepoHead>
          <RepoTop>
            <Oct name="repo" />
            <Text w={133} $size={19} $lh={30} $color={blue} $ml={8}>AnujaLawankar</Text>
            <Text w={8} $size={19} $lh={30} $color={muted} $ml={4}>/</Text>
            <Text w={353} $size={19} $lh={30} $color={blue} $weight={600} $ml={4}>professional_readme_generator_nodejs</Text>
            <Public><Text w={33} $size={11.4} $lh={18} $weight={500} $color={muted}>Public</Text></Public>
            <Spacer />
            <Actions>
              <Btn $w={68} $pl={12}>
                <Oct name="pin" flip />
                <Text w={17} $size={11.4} $weight={600} $ml={8}>Pin</Text>
              </Btn>
              <Btn $w={134} $pl={12} $ml={8}>
                <Oct name="eye" />
                <Text w={48} $size={11.4} $weight={600} $ml={3}>Unwatch</Text>
                <Count $w={20} $ml={5}><Text w={6.5} $size={11.4} $weight={600}>1</Text></Count>
                <Caret $ml={8} $mt={3} />
              </Btn>
              <Btn $w={100} $pl={12} $ml={8} $side="l">
                <Oct name="fork" color="#8c959f" />
                <Text w={24} $size={11.4} $weight={600} $color="#8c959f" $ml={8}>Fork</Text>
                <Count $w={21} $ml={5}><Text w={6.5} $size={11.4} $weight={500} $color="#8c959f">0</Text></Count>
              </Btn>
              <Btn $w={33} $pl={12} $side="r"><Caret $color={muted} $mt={2} /></Btn>
              <Btn $w={100} $pl={12} $ml={12} $side="l" $bg="#f1f3f5">
                <Oct name="star" />
                <Text w={21} $size={11.4} $weight={600} $ml={11}>Star</Text>
                <Count $w={21} $ml={5}><Text w={6.5} $size={11.4} $weight={600}>0</Text></Count>
              </Btn>
              <Btn $w={33} $pl={12} $side="r"><Caret $color={muted} $mt={2} /></Btn>
            </Actions>
          </RepoTop>
          <Nav>
            {navItems.map(([icon, label, w, tw], i) => (
              <NavItem key={label} $w={w} $on={i === 0}>
                <Oct name={icon} />
                <Text w={tw} $weight={i === 0 ? 600 : 400} $pt={1}>{label}</Text>
              </NavItem>
            ))}
          </Nav>
        </RepoHead>
        <Columns>
          <Main>
            <Bar>
              <Btn $w={105} $h={32} $pl={16}>
                <Oct name="branch" />
                <Text w={32} $weight={600} $ml={7} $pt={1}>main</Text>
                <Caret $ml={8} $mt={3} $color="#424a53" />
              </Btn>
              <Oct name="branch" color="#24292f" ml={16} />
              <Text w={7} $weight={600} $ml={3} $pb={2}>1</Text>
              <Text w={42} $color={muted} $ml={3.5} $pb={2}>branch</Text>
              <Oct name="tag" color="#24292f" ml={16.5} />
              <Text w={7} $weight={600} $ml={3.5} $pb={2}>0</Text>
              <Text w={26} $color={muted} $ml={4.5} $pb={2}>tags</Text>
              <Spacer />
              <Btn $w={93} $h={32} $pl={16}><Text w={59} $weight={600} $pt={1}>Go to file</Text></Btn>
              <Btn $w={96} $h={32} $pl={16} $ml={8}>
                <Text w={49} $weight={600} $pt={1}>Add file</Text>
                <Caret $ml={5} $color="#424a53" />
              </Btn>
              <Btn $w={103} $h={32} $pl={12} $ml={8} $green>
                <Oct name="code" color="#fff" />
                <Text w={33} $weight={700} $color="#fff" $ml={8} $pt={1}>Code</Text>
                <Caret $ml={12} $mt={1} $color="#fff" />
              </Btn>
            </Bar>
            <Box>
              <LastCommit>
                <Identicon size={24} />
                <Text w={96.5} $weight={600} $ml={11.5}>AnujaLawankar</Text>
                <Text w={164} $ml={4}>Added code to index.js file</Text>
                <Spacer />
                <Text w={47} $mono $size={11} $color={muted} $pt={1}>1da9f7a</Text>
                <Text w={88} $color={muted} $ml={8}>2 minutes ago</Text>
                <Oct name="history" color="#24292f" ml={16} />
                <Text w={8} $weight={600} $ml={4}>4</Text>
                <Text w={52} $color={muted} $ml={4}>commits</Text>
              </LastCommit>
              {files.map(([icon, name, w, added, recent], i) => (
                <Row key={name} $hover={i === 1}>
                  <Oct name={icon} color={icon === "folder" ? "#54aeff" : muted} />
                  <NameCell><Text w={w}>{name}</Text></NameCell>
                  {added ? <Text w={163.5} $color={muted}>Added code to index.js file</Text> : <Text w={84} $color={muted}>initial commit</Text>}
                  <Spacer />
                  {recent ? <Text w={88} $color={muted}>2 minutes ago</Text> : <Text w={66.5} $color={muted}>3 days ago</Text>}
                </Row>
              ))}
            </Box>
            <Box>
              <ReadmeHead>
                <Oct name="list" />
                <Text w={80} $weight={600} $ml={15.5} $pt={1}>README.md</Text>
                <Spacer />
                <Oct name="pencil" />
              </ReadmeHead>
              <Article>
                <H1><Text w={396} $size={30.6} $lh={42} $weight={600}>README.md Generator File</Text></H1>
                <ByLine>
                  <Text w={132} $size={15.2} $lh={24}>By Anuja Lawankar</Text>
                  <License>
                    <span><Text w={37} $size={10.5} $color="#fff">license</Text></span>
                    <span><Text w={21} $size={10.5} $weight={600} $color="#fff">MIT</Text></span>
                  </License>
                </ByLine>
                <H2><Text w={124} $size={23} $lh={30} $weight={600}>Description</Text></H2>
                <Para>
                  <Text w={812} $size={15.2} $lh={24}>The README.md Generator is used to generate automated README file by just giving some questions answer from</Text>
                  <Text w={788} $size={15.2} $lh={24}>the terminal. README.md Generator had two files i.e index.js and generateMarkdown.js.GenerateMarkdown.js is</Text>
                  <Text w={458} $size={15.2} $lh={24}>imported in indx.js file which created markdown for README file.</Text>
                </Para>
                <H2><Text w={190} $size={23} $lh={30} $weight={600}>Table of Contents</Text></H2>
                <Item><Text w={78} $size={15.2} $lh={24} $color={blue}>Installation</Text></Item>
              </Article>
            </Box>
          </Main>
          <Side>
            <SideHead>
              <Text w={45} $size={15.2} $lh={24} $weight={600}>About</Text>
              <Oct name="gear" />
            </SideHead>
            <Gap $h={16} />
            <Text w={292} $size={15.2} $lh={24} $italic $color={muted}>No description, website, or topics provided.</Text>
            <MetaList>
              <Meta><Oct name="book" /><Text w={50} $color={muted} $ml={11.5}>Readme</Text></Meta>
              <Meta><Oct name="star" /><Text w={8} $color={muted} $weight={600} $ml={11}>0</Text><Text w={30} $color={muted} $ml={4}>stars</Text></Meta>
              <Meta><Oct name="eye" /><Text w={7} $color={muted} $weight={600} $ml={10.5}>1</Text><Text w={55} $color={muted} $ml={4}>watching</Text></Meta>
              <Meta><Oct name="fork" /><Text w={8} $color={muted} $weight={600} $ml={11}>0</Text><Text w={31} $color={muted} $ml={4}>forks</Text></Meta>
            </MetaList>
            <SideBlock>
              <Text w={61} $size={15.2} $lh={24} $weight={600}>Releases</Text>
              <Gap $h={17} />
              <Text w={116} $size={11.4} $lh={18} $color={muted}>No releases published</Text>
              <Text w={109} $size={11.4} $lh={18} $color={blue}>Create a new release</Text>
            </SideBlock>
            <SideBlock>
              <Text w={66} $size={15.2} $lh={24} $weight={600}>Packages</Text>
              <Gap $h={17} />
              <Text w={123.5} $size={11.4} $lh={18} $color={muted}>No packages published</Text>
              <Text w={136} $size={11.4} $lh={18} $color={blue}>Publish your first package</Text>
            </SideBlock>
            <SideBlock $last>
              <Text w={78} $size={15.2} $lh={24} $weight={600}>Languages</Text>
              <LangBar />
              <LangRow>
                <LangDot />
                <Text w={55} $size={11.4} $weight={600}>JavaScript</Text>
                <Text w={38} $size={11.4} $color={muted} $ml={4}>100.0%</Text>
              </LangRow>
            </SideBlock>
          </Side>
        </Columns>
      </Page>
      <Scrollbar>
        <svg width="9" height="5" viewBox="0 0 9 5"><path d="M0 5h8L4 1z" fill="#a3a3a3" /></svg>
        <Thumb />
        <Spacer />
        <svg width="9" height="5" viewBox="0 0 9 5"><path d="M0 0h8L4 4z" fill="#505050" /></svg>
      </Scrollbar>
    </View>
  );
}

/* ---------- taskbar ---------- */

const Taskbar = styled.footer`
  height: 40px; flex: none; background: #c6e8e8; display: flex; align-items: center;
`;
const WinSearch = styled.div`
  width: 288px; height: 40px; background: #fff; border: 1px solid #c3c9c9; margin-left: 16px; display: flex; align-items: center; padding-left: 11px;
`;
const Slot = styled.div`
  width: 49px; height: 40px; flex: none; display: flex; align-items: center; justify-content: center; position: relative;
  ${(p) => p.$on && css`background: linear-gradient(90deg, transparent 0.5px, #e8f6f6 0.5px, #e8f6f6 48.5px, transparent 48.5px);`}
  &::after {
    content: ""; position: absolute; bottom: 0; height: 2px;
    left: ${(p) => (p.$on ? 0 : 4.5)}px; right: ${(p) => (p.$on ? 0 : 4.5)}px;
    background: ${(p) => (p.$run === "multi" ? "linear-gradient(90deg, #0078d7 32px, #5ea9e0 32px)" : p.$run ? "#0078d7" : "none")};
  }
`;
const Clock = styled.div`
  width: 60px; display: flex; flex-direction: column; align-items: center; margin-left: 10px;
`;
const EdgeRule = styled.div`width: 1px; height: 40px; background: #9dbdbd; margin-left: 20px;`;

const Camp = () => (
  <svg width="78" height="38" viewBox="0 0 78 38">
    <path d="M0 38q1-9 10-9 20-5 40-4 18 0 28 4v9z" fill="#4c6b1f" />
    <path d="M0 38q10-6 30-5l20 5z" fill="#38521a" />
    <circle cx="25" cy="7.500" r="6.300" fill="#efb87a" />
    <circle cx="23" cy="5.500" r="3" fill="#f6d09c" />
    <path d="M71 4l-5 9h2l-4 7h2l-3 6h15V8z" fill="#2f5a2c" />
    <path d="M74 6l4 5v17h-6v-9z" fill="#24492a" />
    <path d="M44 10 32 33l12 1 16-1z" fill="#e9c777" />
    <path d="M44 10 31 33h7q5-8 6-23zM44 10q8 1 12 5l6 15-9 4Q50 20 44 10z" fill="#3b8fc6" />
    <path d="M44 10q7 10 9 24h-4Q48 18 44 10z" fill="#1f5f94" />
    <path d="M30 24l12-13M62 30l3 2" stroke="#777" strokeWidth=".6" />
    <path d="M17 12q-1 5 4 9l3-3q4 8-1 13H12q-5-6 0-12l2 2q0-6 3-9z" fill="#f08a24" />
    <path d="M17 19q0 4 3 6 1 5-3 6-5-1-3-6z" fill="#ffd65c" />
    <path d="M9 33l17-4M10 29l15 5" stroke="#7a3a1b" strokeWidth="2.500" />
  </svg>
);

const ChromeLogo = ({ badge }) => (
  <svg width="27" height="27" viewBox="0 0 27 27">
    <circle cx="13.500" cy="13.500" r="12" fill="#fff" />
    <path d="M3.100 7.500A12 12 0 0 1 23.900 7.500H13.500L8.300 16.500z" fill="#ea4335" />
    <path d="M3.100 7.500A12 12 0 0 0 13.500 25.500L18.700 16.500H8.300z" fill="#34a853" />
    <path d="M23.900 7.500A12 12 0 0 1 13.500 25.500L18.700 16.500 13.500 7.500z" fill="#fbbc04" />
    <circle cx="13.500" cy="13.500" r="6" fill="#fff" />
    <circle cx="13.500" cy="13.500" r="4.700" fill="#4285f4" />
    {badge && (
      <g>
        <circle cx="19.500" cy="19" r="7.500" fill="#b7aaa2" />
        <path d="M16 18q0-5 3.500-5t4 5l1 5h-9z" fill="#2c2320" />
        <circle cx="19.500" cy="17" r="1.800" fill="#d6a088" />
        <path d="M14 22q5-4 9 0l-1 3.500q-4 2-7-1z" fill="#f2eeec" />
      </g>
    )}
  </svg>
);

const apps = [
  [null, (
    <svg width="24" height="24" viewBox="0 0 24 24">
      <defs><linearGradient id="edge" x1="0" x2="1" y1="0" y2=".5"><stop offset="0" stopColor="#1fa3dc" /><stop offset=".6" stopColor="#35c1b1" /><stop offset="1" stopColor="#66d655" /></linearGradient></defs>
      <circle cx="12" cy="12" r="12" fill="#0f6cbd" />
      <path d="M0 11A12 12 0 0 1 24 11.500c0 4-3 6-6.500 6-2.500 0-3.500-1-3.500-2 0-.7 1-1.300 1-3.200C15 9.500 12.500 7.500 9 7.500c-4 0-7.500 2-9 3.500z" fill="url(#edge)" />
      <path d="M9 12c-3 5 1 12 7.500 11.300 2.500-.5 4.500-2 5.800-4-6 3-11.300-.3-11.300-4 0-1.500 1-3 1.500-3.300z" fill="#1a4f9c" />
      <path d="M24 17l-3 2.500c-4 1.500-8 0-9.300-2.500-.8-2 .2-4 1.300-5 .8 0 2 .8 2 1.500 0 1-1 1.300-1 2 0 1 1.500 2 3.500 2 3 0 5-1 6.500-3z" fill="#c6e8e8" />
    </svg>
  )],
  [null, (
    <svg width="22" height="19" viewBox="0 0 22 19">
      <path d="M0 1.500Q0 .5 1 .5h8l2 2h10v15H0z" fill="#f0a60d" />
      <path d="M0 4h22v14.500H0z" fill="#ffd65b" />
      <path d="M4 18.500V12q0-1.500 1.500-1.500h11q1.500 0 1.500 1.500v6.500h-4V14H8v4.500z" fill="#2f86d6" />
    </svg>
  )],
  [null, (
    <svg width="24" height="24" viewBox="0 0 24 24">
      <path d="M7 6V2.500Q7 1 8.500 1h7Q17 1 17 2.500V6" fill="none" stroke="#37b5f0" strokeWidth="2" />
      <path d="M1 5h22v15q0 3-3 3H4q-3 0-3-3z" fill="#1b4a80" />
      <path d="M1 5h22v3H1z" fill="#2375b8" />
      <path d="M7.500 9.500h4v4h-4z" fill="#f25022" /><path d="M12.500 9.500h4v4h-4z" fill="#7fba00" /><path d="M7.500 14.500h4v4h-4z" fill="#00a4ef" /><path d="M12.500 14.500h4v4h-4z" fill="#ffb900" />
    </svg>
  )],
  [null, (
    <svg width="24" height="20" viewBox="0 0 24 20">
      <path d="M0 0h24v20H0z" fill="#a9adad" /><path d="M1 3.500h22V19H1z" fill="#080808" />
      <path d="M3 6.500h3M3 6.500v3h3M8 6.500v.8M8 8.700v.8M10 6l2 4M14 9.800h5" stroke="#ddd" fill="none" />
    </svg>
  )],
  [null, (
    <svg width="24" height="23" viewBox="0 0 24 23">
      <path d="M0 8 12 0l12 8v4H0z" fill="#135fa8" /><path d="M2.500 8.500h19L12 17z" fill="#f5f9fc" />
      <path d="M0 8v15h24V8L12 17z" fill="#2ba7ec" /><path d="M0 23 12 14l12 9z" fill="#1b8ddb" />
    </svg>
  )],
  [null, (
    <svg width="24" height="20" viewBox="0 0 24 20">
      <path d="M5.500 1h18l-4.500 18H1z" fill="#3c74d0" /><path d="M8 4.500l5.500 5.500L6 15.500M12.500 15.500H17" stroke="#fff" strokeWidth="2" fill="none" />
    </svg>
  )],
  ["one", (
    <svg width="24" height="25" viewBox="0 0 24 25">
      <path d="M1.500 2h17v22h-17z" fill="#f8f8f4" stroke="#a7a7a0" /><path d="M2 15q8-5 16-3v11.500H2z" fill="#8fd02f" /><path d="M2 18h16v5.500H2z" fill="#57a51a" />
      <path d="M3 3.500h14" stroke="#888" strokeDasharray="1.500 1" strokeWidth="2" /><path d="M6 8v7M9 9v5M9 11h5" stroke="#333" strokeWidth="1.500" />
      <path d="M22 2 13 19" stroke="#e3a33c" strokeWidth="3" /><path d="M22.700 1 21.500 3.500" stroke="#c14b4b" strokeWidth="3" />
    </svg>
  )],
  [null, (
    <svg width="18" height="24" viewBox="0 0 18 24">
      <path d="M0 0h18v24H0z" fill="#6d7a86" /><path d="M2 2h14v4.500H2z" fill="#46cdf2" />
      <path d="M2 8.500h4v4H2zM7 8.500h4v4H7zM12 8.500h4v4h-4zM2 13h4v4H2zM7 13h4v4H7zM2 17.500h4v4H2zM7 17.500h4v4H7z" fill="#d4dbe0" /><path d="M12 13h4v8.500h-4z" fill="#134d8c" />
    </svg>
  )],
  [null, <ChromeLogo />],
  [null, (
    <svg width="25" height="25" viewBox="0 0 25 25">
      <path d="M12 1h10v9H12zM11 11h12v3H11z" fill="#cfcfcf" stroke="#111" /><path d="M14 3h6v5h-6z" fill="#1010e0" />
      <path d="M3 11h10v9H3zM1.500 20.500h13V24h-13z" fill="#cfcfcf" stroke="#111" /><path d="M5 13h6v5H5z" fill="#1010e0" />
      <path d="M17 5 8 12l4 1-5 5 10-6-3-2z" fill="#fff000" stroke="#222" strokeWidth=".6" />
    </svg>
  )],
  ["multi", (
    <svg width="24" height="24" viewBox="0 0 24 24">
      <path d="M11.500.5 6.500 5.500l6 6 5-5z" fill="#f27d78" /><path d="M18 7l6 5-5 5-6-5z" fill="#86cf7c" />
      <path d="M5.500 6.500 0 12l5 5.500 6-5.500z" fill="#7aa9ee" /><path d="M12 13l-6 5 6 6 6-6z" fill="#f5da6c" />
      <path d="M9 4l8 8-5 1v6M12 7v6" stroke="#fff" fill="none" strokeWidth="1.200" />
      <circle cx="12" cy="18" r="1.500" fill="#fff" /><circle cx="17" cy="12" r="1.500" fill="#fff" />
    </svg>
  )],
  ["multi", (
    <svg width="24" height="24" viewBox="0 0 24 24">
      <path d="M17.500 0 24 3v18l-6.500 3L7 14 2.500 17.500.5 16.500 5 12 .5 7.500l2-1L7 10z" fill="#1f8ad2" /><path d="M17.500 0 24 3v18l-6.500 3z" fill="#2ba5ee" /><path d="M17.500 7v10L11 12z" fill="#c6e8e8" />
    </svg>
  )],
  ["on", <ChromeLogo badge />],
  ["one", (
    <svg width="25" height="25" viewBox="0 0 25 25">
      <path d="M12 4q9-1 10 6 0 5-5 6-3 1-3 4t-4 3Q1 22 1 14 1 5 12 4z" fill="#b7d9ee" stroke="#7ba4c2" />
      <circle cx="6" cy="15" r="1.900" fill="#e25545" /><circle cx="7" cy="9.500" r="1.700" fill="#6abf4b" /><circle cx="12" cy="7.500" r="1.600" fill="#f3c53a" /><circle cx="10" cy="19" r="1.600" fill="#4375c7" />
      <path d="M20 7 13 23" stroke="#cf7e2e" strokeWidth="2.500" /><path d="M22 0q4 3 0 8l-4-1q0-5 4-7z" fill="#cda677" />
    </svg>
  )],
];

function Desktop() {
  return (
    <Taskbar>
      <PlainSvg width="16" height="16" viewBox="0 0 16 16" $ml={16}>
        <path d="M0 2.300 6.500 1.400v6.200H0zM7.300 1.300 16 0v7.600H7.300zM0 8.400h6.500v6.200L0 13.700zM7.300 8.400H16V16l-8.700-1.300z" fill="#000" />
      </PlainSvg>
      <WinSearch>
        <Line w={18} h={18} d="M7 11.500L1 17.500M11 1.500a5.500 5.500 0 1 1 0 11 5.500 5.500 0 0 1 0-11z" color="#111" sw={1.3} />
        <Text w={128} $size={14.2} $color="#333" $ml={10} $pt={1}>Type here to search</Text>
        <Spacer />
        <Camp />
      </WinSearch>
      <Line w={18} h={18} d="M2 1v3.500h10V1M2.500 7.500h9v5h-9zM2 17v-2.500h10V17M15.500 1v3M15.500 9v8M14 6.500h3" color="#111" sw={1.3} ml={15} />
      <Gap $h={1} $w={16.5} />
      {apps.map(([state, icon], i) => (
        <Slot key={i} $on={state === "on"} $run={state}>{icon}</Slot>
      ))}
      <Spacer />
      <svg width="23" height="23" viewBox="0 0 23 23">
        <defs><linearGradient id="moon" x1="0" x2="0" y1="0" y2="1"><stop offset="0" stopColor="#f8c843" /><stop offset="1" stopColor="#ef7d1a" /></linearGradient></defs>
        <path d="M13.500 0A11.500 11.500 0 1 1 0 14c7 3 16-2 13.500-14z" fill="url(#moon)" />
      </svg>
      <Text w={27} $size={14.2} $color="#111" $ml={8} $pt={1}>44°F</Text>
      <Text w={31} $size={14.2} $color="#111" $ml={9} $pt={1}>Clear</Text>
      <Line w={14} h={10} d="M1.500 7.500L7 2l5.500 5.500" color="#111" sw={1.3} ml={28} />
      <Line w={14} h={18} d="M1.500 5h7v8h-7zM8.500 8l3.500-2v6l-3.500-2M2 2.500Q5.500 0 9 2.500M2 15.500q3.500 2.500 7 0" color="#111" sw={1.2} ml={19} />
      <PlainSvg width="17" height="14" viewBox="0 0 17 14" $ml={14}>
        <path d="M4 12.500Q.7 12 .7 9T4 6q.5-4.300 4.500-4.300 3 0 4 3 3.700.3 3.700 4 0 3.300-3.200 3.800z" fill="#9aa8a8" stroke="#111" /><path d="M2 0l13 13.500" stroke="#111" strokeWidth="1.300" />
      </PlainSvg>
      <Line w={14} h={14} d="M1 13Q1 2 13 1.500M4 13q0-7.500 9-8M7 13q0-4.500 6-5M10 13q0-2 3-2" color="#111" sw={1.2} ml={18} />
      <PlainSvg width="18" height="14" viewBox="0 0 18 14" $ml={16}>
        <path d="M6 3.500h9.500v7.500H5.500M16.800 5.500v3.500M2 0v3M5 0v3M.8 3h5v2.500h-5zM3.300 5.500V11h2.500" stroke="#111" strokeWidth="1.200" fill="none" />
        <path d="M7.500 5.500h5v4h-5z" fill="#111" />
      </PlainSvg>
      <PlainSvg width="18" height="14" viewBox="0 0 18 14" $ml={14}>
        <path d="M1 5h2.500L7 2v10L3.500 9H1z" fill="none" stroke="#111" strokeWidth="1.200" /><path d="M9.500 5q1.500 2 0 4" fill="none" stroke="#111" /><path d="M12 3.500q2.500 3.500 0 7M14.500 2q3.500 5 0 10" fill="none" stroke="#7d9292" />
      </PlainSvg>
      <Clock>
        <Text w={43} $size={11.4} $lh={18} $color="#111">7:33 AM</Text>
        <Text w={52} $size={11.4} $lh={18} $color="#111">4/10/2023</Text>
      </Clock>
      <Line w={17} h={17} d="M.7 1h15.600v11.500H11L8.500 15.500V12.500H.7z" color="#111" sw={1.3} ml={14} />
      <EdgeRule />
      <Gap $h={1} $w={4} />
    </Taskbar>
  );
}

export default function App() {
  return (
    <Screen>
      <Global />
      <Browser />
      <GitHub />
      <Desktop />
    </Screen>
  );
}
